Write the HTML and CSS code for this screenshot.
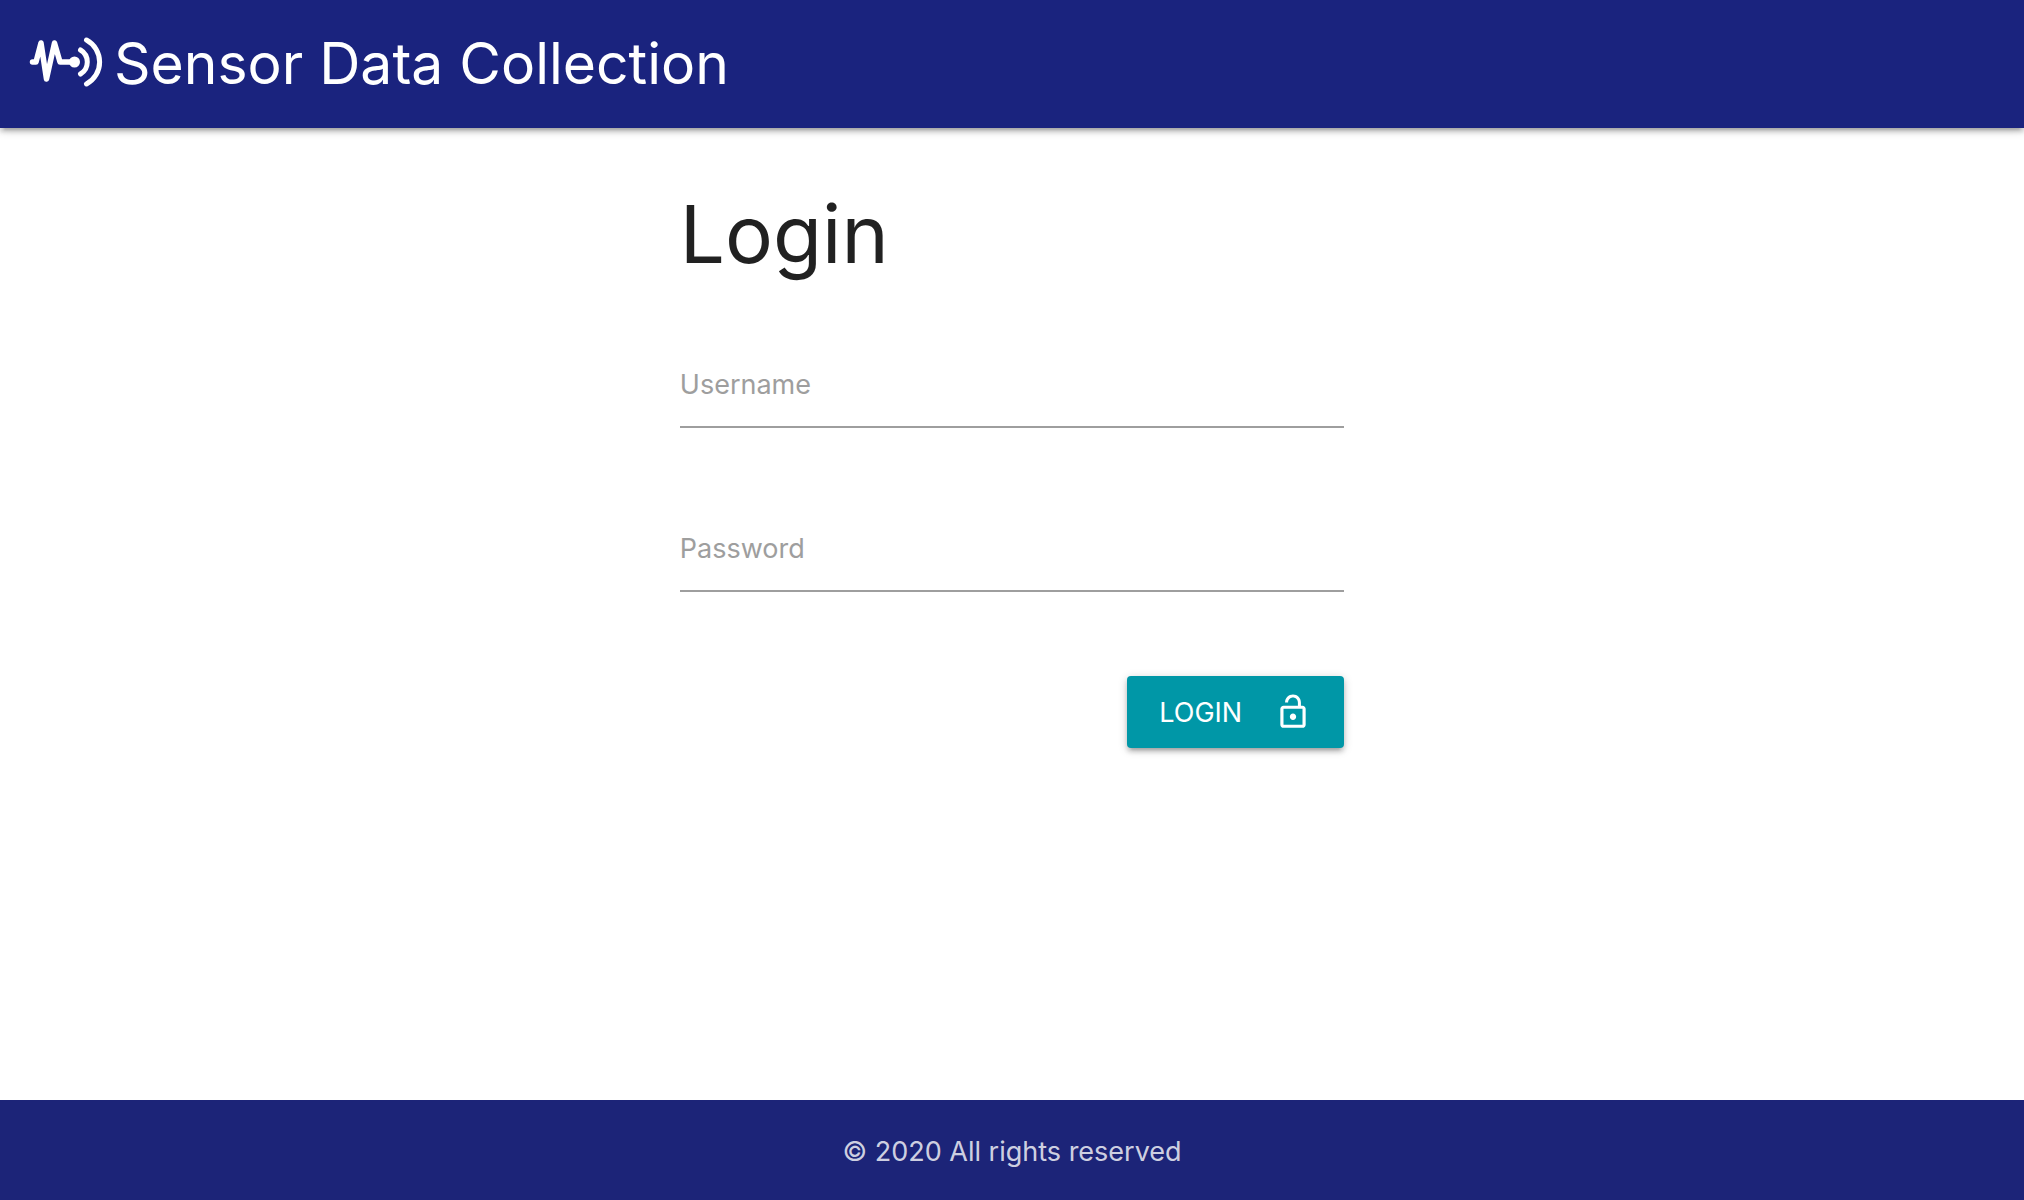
FILE: index.html
```html
<!DOCTYPE html>
<html lang="en">
<head>
  <meta charset="utf-8">
  <meta name="viewport" content="width=device-width, initial-scale=1">
  <title>Sensor Data Collection</title>
  <link rel="stylesheet" href="styles.css">
</head>
<body>
  <header class="navbar">
    <a class="brand" href="#">
      <svg class="brand-icon" viewBox="0 0 76 52" fill="none" stroke="currentColor" stroke-width="5" stroke-linecap="round" stroke-linejoin="round" aria-hidden="true">
        <path d="M4.500 26H8L13 7L18.500 43L26.500 7L32 26H45" stroke-width="5.500"/>
        <circle cx="46.500" cy="26" r="5.500" fill="currentColor" stroke="none"/>
        <path d="M52.500 14A14 14 0 0 1 52.500 38M58.500 4A25 25 0 0 1 58.500 48"/>
      </svg>
      <span>Sensor Data Collection</span>
    </a>
  </header>

  <main class="content">
    <form class="login">
      <h1 class="title">Login</h1>
      <div class="field">
        <input class="field-input" id="username" name="username" type="text" placeholder=" " autocomplete="username">
        <label class="field-label" for="username">Username</label>
      </div>
      <div class="field">
        <input class="field-input" id="password" name="password" type="password" placeholder=" " autocomplete="current-password">
        <label class="field-label" for="password">Password</label>
      </div>
      <button class="submit" type="submit">
        <span>LOGIN</span>
        <svg class="submit-icon" viewBox="0 0 24 24" fill="currentColor" aria-hidden="true">
          <path d="M12 17c1.100 0 2-.9 2-2s-.9-2-2-2-2 .9-2 2 .9 2 2 2zm6-9h-1V6c0-2.760-2.240-5-5-5S7 3.240 7 6h1.900c0-1.710 1.390-3.100 3.100-3.100s3.100 1.390 3.100 3.100v2H6c-1.100 0-2 .9-2 2v10c0 1.100.9 2 2 2h12c1.100 0 2-.9 2-2V10c0-1.100-.9-2-2-2zm0 12H6V10h12v10z"/>
        </svg>
      </button>
    </form>
  </main>

  <footer class="footer">© 2020 All rights reserved</footer>
</body>
</html>
```
FILE: styles.css
```css
* {
  box-sizing: border-box;
}

body {
  display: flex;
  flex-direction: column;
  min-height: 100vh;
  margin: 0;
  background: #fff;
  color: rgba(0, 0, 0, 0.87);
  font-family: Inter, "Liberation Sans", sans-serif;
  font-size: 27px;
}

.navbar {
  display: flex;
  padding: 0 28px;
  background: #1a237e;
  box-shadow: 0 4px 4px 0 rgba(0, 0, 0, 0.14), 0 6px 2px -4px rgba(0, 0, 0, 0.12), 0 2px 10px 0 rgba(0, 0, 0, 0.2);
}

.brand {
  display: flex;
  align-items: center;
  gap: 10px;
  color: #fff;
  font-size: 57px;
  line-height: 128px;
  text-decoration: none;
}

.brand-icon {
  width: 76px;
  height: 52px;
  margin-bottom: 4px;
}

.content {
  flex: 1;
}

.login {
  display: flex;
  flex-direction: column;
  width: 35%;
  margin: 0 auto;
  padding: 60px 22px;
}

.title {
  margin: 0 0 60px;
  font-size: 80px;
  font-weight: 400;
  line-height: 92px;
}

.field {
  position: relative;
  margin-bottom: 76px;
}

.field-input {
  display: block;
  width: 100%;
  height: 88px;
  padding: 0;
  border: 0;
  border-bottom: 2px solid #9e9e9e;
  border-radius: 0;
  outline: none;
  background: transparent;
  color: inherit;
  font: inherit;
}

.field-label {
  position: absolute;
  top: 0;
  left: 0;
  color: #9e9e9e;
  line-height: 90px;
  cursor: text;
}

.field-input:not(:placeholder-shown) + .field-label {
  font-size: 20px;
  line-height: 20px;
}

.submit {
  display: flex;
  align-items: center;
  align-self: flex-end;
  gap: 32px;
  height: 72px;
  margin-top: 8px;
  padding: 0 32px;
  border: 0;
  border-radius: 4px;
  background: #0097a7;
  box-shadow: 0 4px 4px 0 rgba(0, 0, 0, 0.14), 0 6px 2px -4px rgba(0, 0, 0, 0.12), 0 2px 10px 0 rgba(0, 0, 0, 0.2);
  color: #fff;
  font: inherit;
  cursor: pointer;
}

.submit-icon {
  width: 38px;
  height: 38px;
}

.footer {
  padding: 32px 0 28px;
  background: #1c2478;
  color: rgba(255, 255, 255, 0.8);
  line-height: 40px;
  text-align: center;
}
```
